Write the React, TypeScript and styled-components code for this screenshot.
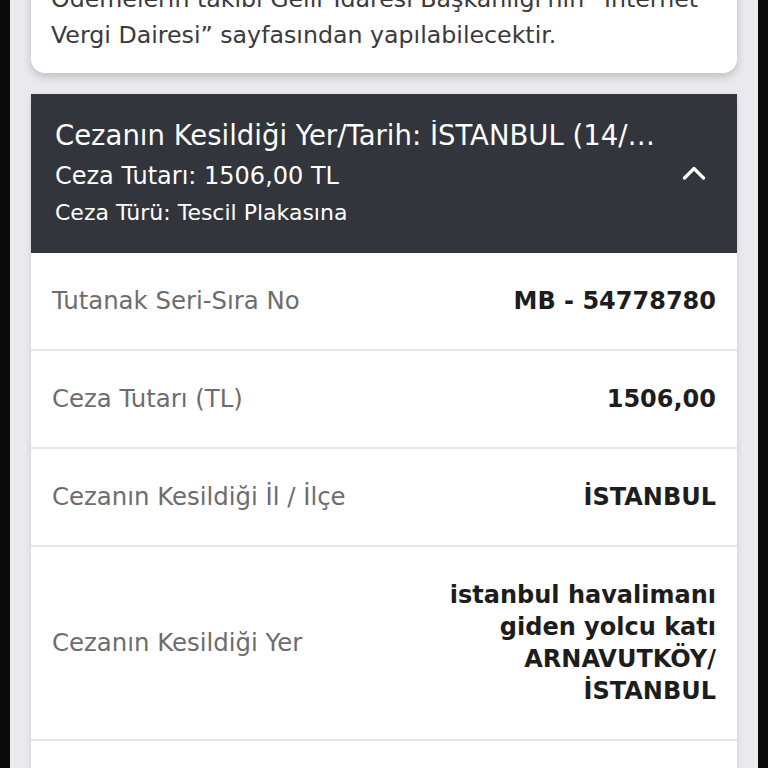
import React from "react";
import styled, { createGlobalStyle } from "styled-components";

const GlobalStyle = createGlobalStyle`
  html, body {
    margin: 0;
    padding: 0;
    background: #0a0a0a;
  }
  body {
    font-family: "DejaVu Sans", "Noto Sans", sans-serif;
  }
`;

const Frame = styled.div`
  margin: 0 10px;
  height: 100vh;
  overflow: hidden;
  background: #eaeaee;
  padding: 0 21px;
  display: flex;
  flex-direction: column;
  gap: 21px;
`;

const NoticeCard = styled.div`
  flex-shrink: 0;
  margin-top: -39px;
  background: #ffffff;
  border-radius: 0 0 14px 14px;
  padding: 20px 20px;
  box-shadow: 0 4px 8px rgba(0, 0, 0, 0.18);
  color: #3a3a3a;
  font-size: 23.7px;
  line-height: 36px;
  white-space: nowrap;
  overflow: hidden;
`;

const Accordion = styled.section`
  flex-shrink: 0;
  background: #ffffff;
  box-shadow: 0 2px 6px rgba(0, 0, 0, 0.12);
`;

const AccordionHeader = styled.div`
  display: flex;
  align-items: center;
  background: #32353c;
  color: #ffffff;
  padding: 26px 31px 27px 24px;
`;

const HeaderText = styled.div`
  flex: 1;
  min-width: 0;
  display: flex;
  flex-direction: column;
  gap: 10.5px;
`;

const HeaderLine = styled.div<{ $size: number; $lh: number }>`
  font-size: ${(p) => p.$size}px;
  line-height: ${(p) => p.$lh}px;
  white-space: nowrap;
  overflow: hidden;
  text-overflow: ellipsis;
`;

const ChevronBox = styled.div`
  flex-shrink: 0;
  margin-left: 16px;
  display: flex;
  align-items: center;
`;

const Row = styled.div`
  display: flex;
  align-items: center;
  justify-content: space-between;
  gap: 20px;
  padding: 32px 21px;
  border-bottom: 2px solid #e6e6e9;
  line-height: 32px;
`;

const Label = styled.div`
  color: #6d6d6d;
  font-size: 24.4px;
`;

const Value = styled.div`
  color: #1d1d1d;
  font-size: 24px;
  font-weight: 700;
  text-align: right;
  max-width: 290px;
`;

const rows: [string, string][] = [
  ["Tutanak Seri-Sıra No", "MB - 54778780"],
  ["Ceza Tutarı (TL)", "1506,00"],
  ["Cezanın Kesildiği İl / İlçe", "İSTANBUL"],
  ["Cezanın Kesildiği Yer", "istanbul havalimanı giden yolcu katı ARNAVUTKÖY/ İSTANBUL"],
  ["Cezanın Kesildiği Tarih", "14/06/2023"],
];

const Chevron = () => (
  <svg width="24" height="14" viewBox="0 0 24 14" fill="none">
    <polyline
      points="2.5,12 12,2.5 21.5,12"
      stroke="#ffffff"
      strokeWidth="3.2"
      strokeLinecap="round"
      strokeLinejoin="round"
    />
  </svg>
);

export default function App() {
  return (
    <>
      <GlobalStyle />
      <Frame>
        <NoticeCard>
          Ödemelerin takibi Gelir İdaresi Başkanlığı'nın “İnternet
          <br />
          Vergi Dairesi” sayfasından yapılabilecektir.
        </NoticeCard>
        <Accordion>
          <AccordionHeader>
            <HeaderText>
              <HeaderLine $size={27.5} $lh={31}>
                Cezanın Kesildiği Yer/Tarih: İSTANBUL (14/06/2023)
              </HeaderLine>
              <HeaderLine $size={24} $lh={28}>
                Ceza Tutarı: 1506,00 TL
              </HeaderLine>
              <HeaderLine $size={22} $lh={26}>
                Ceza Türü: Tescil Plakasına
              </HeaderLine>
            </HeaderText>
            <ChevronBox>
              <Chevron />
            </ChevronBox>
          </AccordionHeader>
          {rows.map(([label, value]) => (
            <Row key={label}>
              <Label>{label}</Label>
              <Value>{value}</Value>
            </Row>
          ))}
        </Accordion>
      </Frame>
    </>
  );
}
